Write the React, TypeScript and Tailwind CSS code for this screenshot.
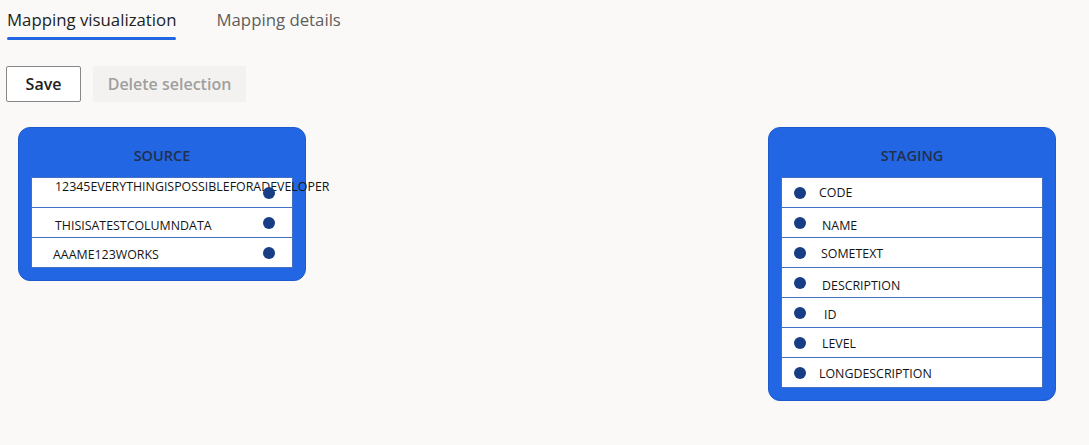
type Row = { label: string; text: string; dot: string };

const sourceRows: Row[] = [
  { label: "12345EVERYTHINGISPOSSIBLEFORADEVELOPER", text: "left-[23px] top-[-5px]", dot: "left-[231px] top-[0.5px]" },
  { label: "THISISATESTCOLUMNDATA", text: "left-[23px] top-[4px]", dot: "left-[231px] top-0" },
  { label: "AAAME123WORKS", text: "left-[21px] top-[3px]", dot: "left-[231px] top-0" },
];

const stagingRows: Row[] = [
  { label: "CODE", text: "left-[37px] top-[1px]", dot: "left-[12px] top-[0.5px]" },
  { label: "NAME", text: "left-[40px] top-[4px]", dot: "left-[12px] top-0" },
  { label: "SOMETEXT", text: "left-[39px] top-[2px]", dot: "left-[12px] top-0" },
  { label: "DESCRIPTION", text: "left-[40px] top-[4px]", dot: "left-[12px] top-0" },
  { label: "ID", text: "left-[42px] top-[3px]", dot: "left-[12px] top-0" },
  { label: "LEVEL", text: "left-[40px] top-[2px]", dot: "left-[12px] top-0" },
  { label: "LONGDESCRIPTION", text: "left-[37px] top-[2px]", dot: "left-[12px] top-0" },
];

function TableNode({ title, rows }: { title: string; rows: Row[] }) {
  return (
    <div className="w-[288px] rounded-[12px] border border-[#1d5bcf] bg-[#2266e3] px-[12px] pb-[12px]">
      <div className="flex h-[49px] items-center justify-center pt-[6px] text-[14.5px] font-semibold text-[#22304d]">
        {title}
      </div>
      <div className="border border-[#4470c4] bg-white">
        {rows.map((r, i) => (
          <div
            key={r.label}
            className={`flex h-[29px] items-center ${i > 0 ? "border-t border-[#4470c4] h-[30px]" : ""}`}
          >
            {/* dot + label share the row, nudged a little like the original canvas */}
            <div className="relative h-full w-full">
              <span className={`absolute ${r.text} flex h-full items-center whitespace-nowrap text-[12.4px] text-[#141414]`}>
                {r.label}
              </span>
              <span className={`absolute ${r.dot} flex h-full items-center`}>
                <span className="h-[12px] w-[12px] rounded-full bg-[#173d85]" />
              </span>
            </div>
          </div>
        ))}
      </div>
    </div>
  );
}

export default function App() {
  return (
    <div className="min-h-screen bg-[#faf9f8] font-['Open_Sans',sans-serif]">
      {/* Pivot tabs */}
      <div className="flex gap-[40px] pl-[7px]">
        <button className="flex flex-col pt-[8px]">
          <span className="text-[16.8px] leading-[23px] text-[#201f1e]">Mapping visualization</span>
          <span className="mt-[6px] h-[3px] w-full rounded-sm bg-[#2266e3]" />
        </button>
        <button className="flex flex-col pt-[8px]">
          <span className="text-[16.8px] leading-[23px] text-[#605e5c]">Mapping details</span>
        </button>
      </div>

      {/* Toolbar */}
      <div className="mt-[26px] flex gap-[12px] pl-[6px]">
        <button className="h-[36px] w-[75px] rounded-[2px] border border-[#8a8886] bg-white text-[16px] font-semibold text-[#201f1e]">
          Save
        </button>
        <button className="h-[36px] w-[153px] rounded-[2px] bg-[#f3f2f1] text-[16px] font-semibold text-[#a19f9d]">
          Delete selection
        </button>
      </div>

      {/* Canvas */}
      <div className="mt-[25px] flex items-start gap-[462px] pl-[18px]">
        <TableNode title="SOURCE" rows={sourceRows} />
        <TableNode title="STAGING" rows={stagingRows} />
      </div>
    </div>
  );
}
